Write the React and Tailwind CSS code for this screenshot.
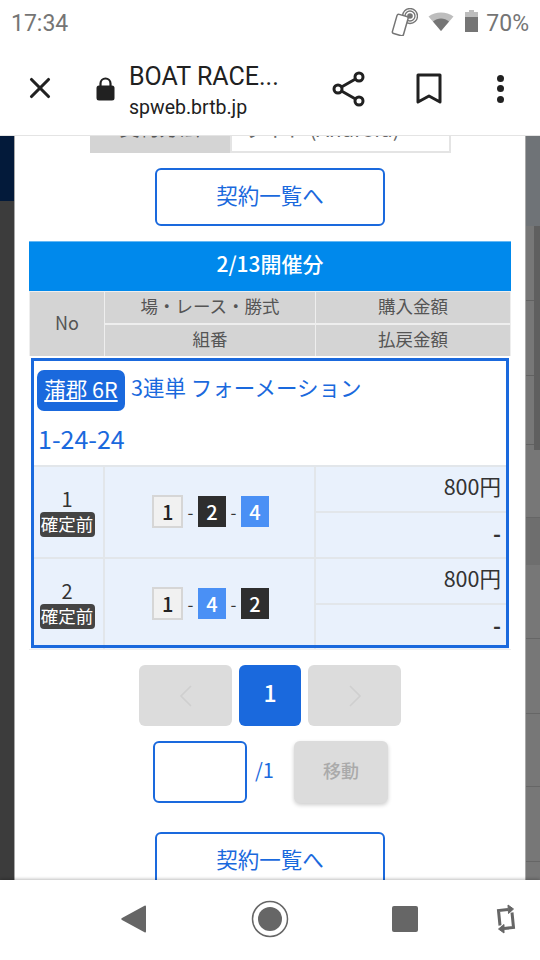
import { X } from 'lucide-react'

function StatusBar() {
  return (
    <div className="h-[48px] flex items-center justify-between pl-[11px] pr-[11px] pb-[2px] text-[#757575] font-['Roboto',sans-serif]">
      <span className="text-[23px] leading-none">17:34</span>
      <div className="flex items-center">
        <svg width="28" height="28" viewBox="0 0 28 28" fill="none" stroke="#757575" className="mr-[10px] mb-[3px]">
          <circle cx="20" cy="8" r="2.800" fill="#757575" stroke="none" />
          <circle cx="20" cy="8" r="5" strokeWidth="1.300" />
          <circle cx="20" cy="8" r="7.500" strokeWidth="1.300" />
          <rect x="4.500" y="7" width="11.500" height="20" rx="1.800" fill="#fff" strokeWidth="1.500" transform="rotate(16 10 17)" />
        </svg>
        <svg width="26" height="20" viewBox="0 0 26 20" className="mr-[11px] mb-[4px]">
          <path d="M0.500 5.500C7.500 0 18.500 0 25.500 5.500L13 20Z" fill="#bdbdbd" />
          <path d="M5 10.500C9.500 6.500 16.500 6.500 21 10.500L13 20Z" fill="#757575" />
        </svg>
        <svg width="13" height="22" viewBox="0 0 13 22" className="mr-[8px] mb-[4px]">
          <path d="M4 0h5v2h4v5H0V2h4Z" fill="#bdbdbd" />
          <rect y="7" width="13" height="15" fill="#757575" />
        </svg>
        <span className="text-[23px] leading-none">70%</span>
      </div>
    </div>
  )
}

function Toolbar() {
  return (
    <div className="h-[88px] flex items-center border-b border-[#e4e4e4] text-[#212121] font-['Roboto',sans-serif]">
      <X size={34} strokeWidth={2.200} className="ml-[23px] mb-[7px] shrink-0" />
      <svg width="19" height="24" viewBox="0 0 19 24" className="ml-[39px] mb-[6px] shrink-0">
        <path d="M4.500 9V6.500a5 5 0 0 1 10 0V9" fill="none" stroke="#212121" strokeWidth="2.200" />
        <rect x="0.500" y="8.500" width="18" height="15" rx="2.500" fill="#212121" />
      </svg>
      <div className="ml-[14px] w-[190px] flex flex-col">
        <span className="text-[25px] leading-[32px]">BOAT RACE...</span>
        <span className="text-[19.500px] leading-[30px]">spweb.brtb.jp</span>
      </div>
      <svg width="34" height="36" viewBox="0 0 34 36" fill="none" stroke="#212121" strokeWidth="3" className="ml-[13px] mb-[6px] shrink-0">
        <circle cx="6" cy="18" r="4" />
        <circle cx="27" cy="6" r="4" />
        <circle cx="27" cy="30" r="4" />
        <path d="M9.500 16L23.500 8M9.500 20L23.500 28" />
      </svg>
      <svg width="26" height="32" viewBox="0 0 26 32" fill="none" stroke="#212121" strokeWidth="3" className="ml-[50px] mb-[6px] shrink-0">
        <path d="M2 2h22v27l-11-6-11 6Z" strokeLinejoin="round" />
      </svg>
      <div className="ml-[55px] mb-[6px] flex flex-col gap-[3.500px] shrink-0">
        <span className="w-[7px] h-[7px] rounded-full bg-[#212121]" />
        <span className="w-[7px] h-[7px] rounded-full bg-[#212121]" />
        <span className="w-[7px] h-[7px] rounded-full bg-[#212121]" />
      </div>
    </div>
  )
}

function ListButton() {
  return (
    <div className="shrink-0 w-[230px] h-[58px] mx-auto border-2 border-[#1a69dd] rounded-[6px] flex items-center justify-center text-[#1a69dd] text-[21.500px] pb-[3px]">
      契約一覧へ
    </div>
  )
}

function Boat({ n }) {
  if (n === 1) {
    return <span className="w-[31px] h-[33px] bg-[#f1f1f1] border-2 border-[#d6d6d6] text-[#222] flex items-center justify-center text-[20px] font-medium">1</span>
  }
  if (n === 2) {
    return <span className="w-[28px] h-[31px] bg-[#2e2e2e] text-white flex items-center justify-center text-[20px] font-medium">2</span>
  }
  return <span className="w-[28px] h-[31px] bg-[#4a90f5] text-white flex items-center justify-center text-[20px] font-medium">4</span>
}

function BetRow({ no, boats }) {
  return (
    <div className="grid grid-cols-[74px_211px_1fr] h-[92px] bg-[#e9f1fc] border-t-2 border-[#e2e6ea]">
      <div className="flex flex-col items-center justify-center border-r-2 border-[#e2e6ea] text-[#333] pb-[2px]">
        <span className="text-[20px] leading-[26px]">{no}</span>
        <span className="w-[55px] h-[25px] bg-[#444] rounded-[4px] text-white text-[17.500px] leading-[24px] text-center whitespace-nowrap">確定前</span>
      </div>
      <div className="flex items-center justify-center gap-[4.500px] border-r-2 border-[#e2e6ea] text-[#333] text-[17px] pb-[1px] pl-[2px]">
        <Boat n={boats[0]} />
        <span>-</span>
        <Boat n={boats[1]} />
        <span>-</span>
        <Boat n={boats[2]} />
      </div>
      <div className="flex flex-col text-[#333] text-[21.500px] text-right">
        <div className="h-[46px] leading-[38px] pr-[8px] border-b-2 border-[#e2e6ea]">800円</div>
        <div className="flex-1 leading-[40px] pr-[8px] font-bold">-</div>
      </div>
    </div>
  )
}

function ContractTable() {
  return (
    <div className="shrink-0 mx-[14px] border-b border-[#eeeeee]">
      <div className="h-[50px] mt-[15px] bg-[#0089ec] border-t border-[#66b8f4] flex items-center justify-center text-white text-[21px] font-medium pb-[6px]">
        2/13開催分
      </div>
      <div className="grid grid-cols-[74px_210px_1fr] grid-rows-[31px_31px] gap-x-[1px] gap-y-[2px] border border-[#eeeeee] border-b-0 bg-[#eeeeee] text-[#555] text-[17.500px]">
        <div className="row-span-2 bg-[#d4d4d4] flex items-center justify-center text-[18px] pb-[3px]">No</div>
        <div className="bg-[#d4d4d4] flex items-center justify-center pb-[3px]">場・レース・勝式</div>
        <div className="bg-[#d4d4d4] flex items-center justify-center pb-[3px]">購入金額</div>
        <div className="bg-[#d4d4d4] flex items-center justify-center pb-[3px]">組番</div>
        <div className="bg-[#d4d4d4] flex items-center justify-center pb-[3px]">払戻金額</div>
      </div>
      <div className="relative mx-[2px] mt-[2px]">
        <div className="h-[107px] pl-[6px] pt-[12px] text-[#1a69dd] bg-white">
          <div className="flex items-start gap-[6px]">
            <span className="w-[88px] h-[41px] rounded-[7px] bg-[#1a69dd] text-white text-[21.500px] pb-[2px] flex items-center justify-center underline underline-offset-2 whitespace-nowrap">蒲郡 6R</span>
            <span className="text-[21.500px] leading-[34px]">3連単 フォーメーション</span>
          </div>
          <div className="text-[25px] leading-[32px] mt-[11px] ml-[1px]">1-24-24</div>
        </div>
        <BetRow no="1" boats={[1, 2, 4]} />
        <BetRow no="2" boats={[1, 4, 2]} />
        <div className="absolute inset-x-0 top-0 bottom-[1px] border-[3px] border-[#1a69dd] pointer-events-none" />
      </div>
    </div>
  )
}

function Pagination() {
  return (
    <div className="shrink-0 flex justify-center gap-[7px] mt-[15px] text-[#c9c9c9]">
      <div className="w-[93px] h-[61px] bg-[#dcdcdc] rounded-[6px] flex items-center justify-center">
        <svg width="14" height="22" viewBox="0 0 14 22" fill="none" stroke="#cfcfcf" strokeWidth="1.600"><path d="M12 1L2 11l10 10" /></svg>
      </div>
      <div className="w-[62px] h-[61px] bg-[#1a69dd] rounded-[6px] flex items-center justify-center text-white text-[23px] font-medium pb-[6px]">1</div>
      <div className="w-[93px] h-[61px] bg-[#dcdcdc] rounded-[6px] flex items-center justify-center">
        <svg width="14" height="22" viewBox="0 0 14 22" fill="none" stroke="#cfcfcf" strokeWidth="1.600"><path d="M2 1l10 10L2 21" /></svg>
      </div>
    </div>
  )
}

function PageJump() {
  return (
    <div className="shrink-0 flex items-start mt-[15px] ml-[138px]">
      <div className="w-[94px] h-[62px] border-2 border-[#1a69dd] rounded-[6px] bg-white" />
      <span className="w-[47px] pl-[8px] text-[#1a69dd] text-[20px] leading-[58px]">/1</span>
      <div className="w-[94px] h-[62px] bg-[#dcdcdc] rounded-[6px] shadow-[0_2px_4px_rgba(0,0,0,0.2)] flex items-center justify-center text-[#aaaaaa] text-[18px] font-medium pb-[4px]">移動</div>
    </div>
  )
}

function NavBar() {
  return (
    <div className="relative h-[80px] shrink-0 bg-white shadow-[0_-1px_3px_rgba(0,0,0,0.25)] flex items-center pb-[2px]">
      <svg width="26" height="28" viewBox="0 0 26 28" className="ml-[121px] shrink-0">
        <path d="M25 1.500V26.500a1 1 0 0 1-1.500 .8L1 15a1.200 1.200 0 0 1 0-2L23.500 .7A1 1 0 0 1 25 1.500Z" fill="#666" />
      </svg>
      <svg width="38" height="38" viewBox="0 0 38 38" className="ml-[104px] shrink-0">
        <circle cx="19" cy="19" r="17.500" fill="none" stroke="#666" strokeWidth="1.500" />
        <circle cx="19" cy="19" r="12" fill="#666" />
      </svg>
      <div className="ml-[103px] w-[26px] h-[26px] bg-[#666] rounded-[2px] shrink-0" />
      <svg width="20" height="30" viewBox="0 0 20 30" fill="none" stroke="#666" strokeWidth="3" className="ml-[78px] shrink-0">
        <path d="M12 5.500L2.500 6.500l1.500 15" />
        <path d="M8 24.500l9.500-1L16 8.500" />
        <path d="M12 1l5.500 4-5 4.500z" fill="#666" strokeWidth="1" />
        <path d="M8 20.500l-5.500 4.500 5.500 4z" fill="#666" strokeWidth="1" />
      </svg>
    </div>
  )
}

function RightGutter() {
  return (
    <div className="flex-1 flex flex-col bg-[#777777]">
      <div className="h-[90px] shrink-0 bg-[#6f7377]" />
      <div className="h-[224px] shrink-0 flex">
        <div className="w-[8px] flex flex-col">
          <div className="h-[75px] border-b border-[#626262]" />
          <div className="h-[75px] border-b border-[#626262]" />
          <div className="h-[69px] border-b border-[#626262]" />
        </div>
        <div className="flex-1 bg-[#5f5f5f]" />
      </div>
      <div className="h-[68px] shrink-0 border-b border-[#666666]" />
      <div className="h-[47px] shrink-0 bg-[#6e6e6e]" />
      <div className="h-[74px] shrink-0 border-b border-[#666666]" />
      <div className="h-[75px] shrink-0 border-b border-[#666666]" />
      <div className="h-[73px] shrink-0 border-b border-[#666666]" />
      <div className="h-[75px] shrink-0 border-b border-[#666666]" />
    </div>
  )
}

export default function App() {
  return (
    <div className="w-[540px] h-[960px] flex flex-col overflow-hidden bg-white font-['Noto_Sans_CJK_JP','Noto_Sans',sans-serif]">
      <StatusBar />
      <Toolbar />
      <div className="flex-1 min-h-0 flex">
        <div className="w-[14px] flex flex-col">
          <div className="h-[65px] bg-[#031a3a]" />
          <div className="flex-1 bg-[#3c3c3c]" />
        </div>
        <div className="w-[512px] border-x border-[#a8a8a8] bg-white flex flex-col overflow-hidden">
          <div className="h-[17px] shrink-0 flex justify-center overflow-hidden">
            <div className="w-[361px] h-full grid grid-cols-[140px_1fr]">
              <div className="bg-[#d4d4d4] overflow-hidden text-center text-[#555] text-[20px]">
                <div className="-mt-[23px] leading-[30px]">契約方法</div>
              </div>
              <div className="border-2 border-t-0 border-[#e4e4e4] overflow-hidden pl-[12px] text-[#666] text-[20.500px]">
                <div className="-mt-[23px] leading-[30px]">ライト (Android)</div>
              </div>
            </div>
          </div>
          <div className="h-[15px] shrink-0" />
          <ListButton />
          <ContractTable />
          <Pagination />
          <PageJump />
          <div className="h-[29px] shrink-0" />
          <ListButton />
        </div>
        <RightGutter />
      </div>
      <NavBar />
    </div>
  )
}
